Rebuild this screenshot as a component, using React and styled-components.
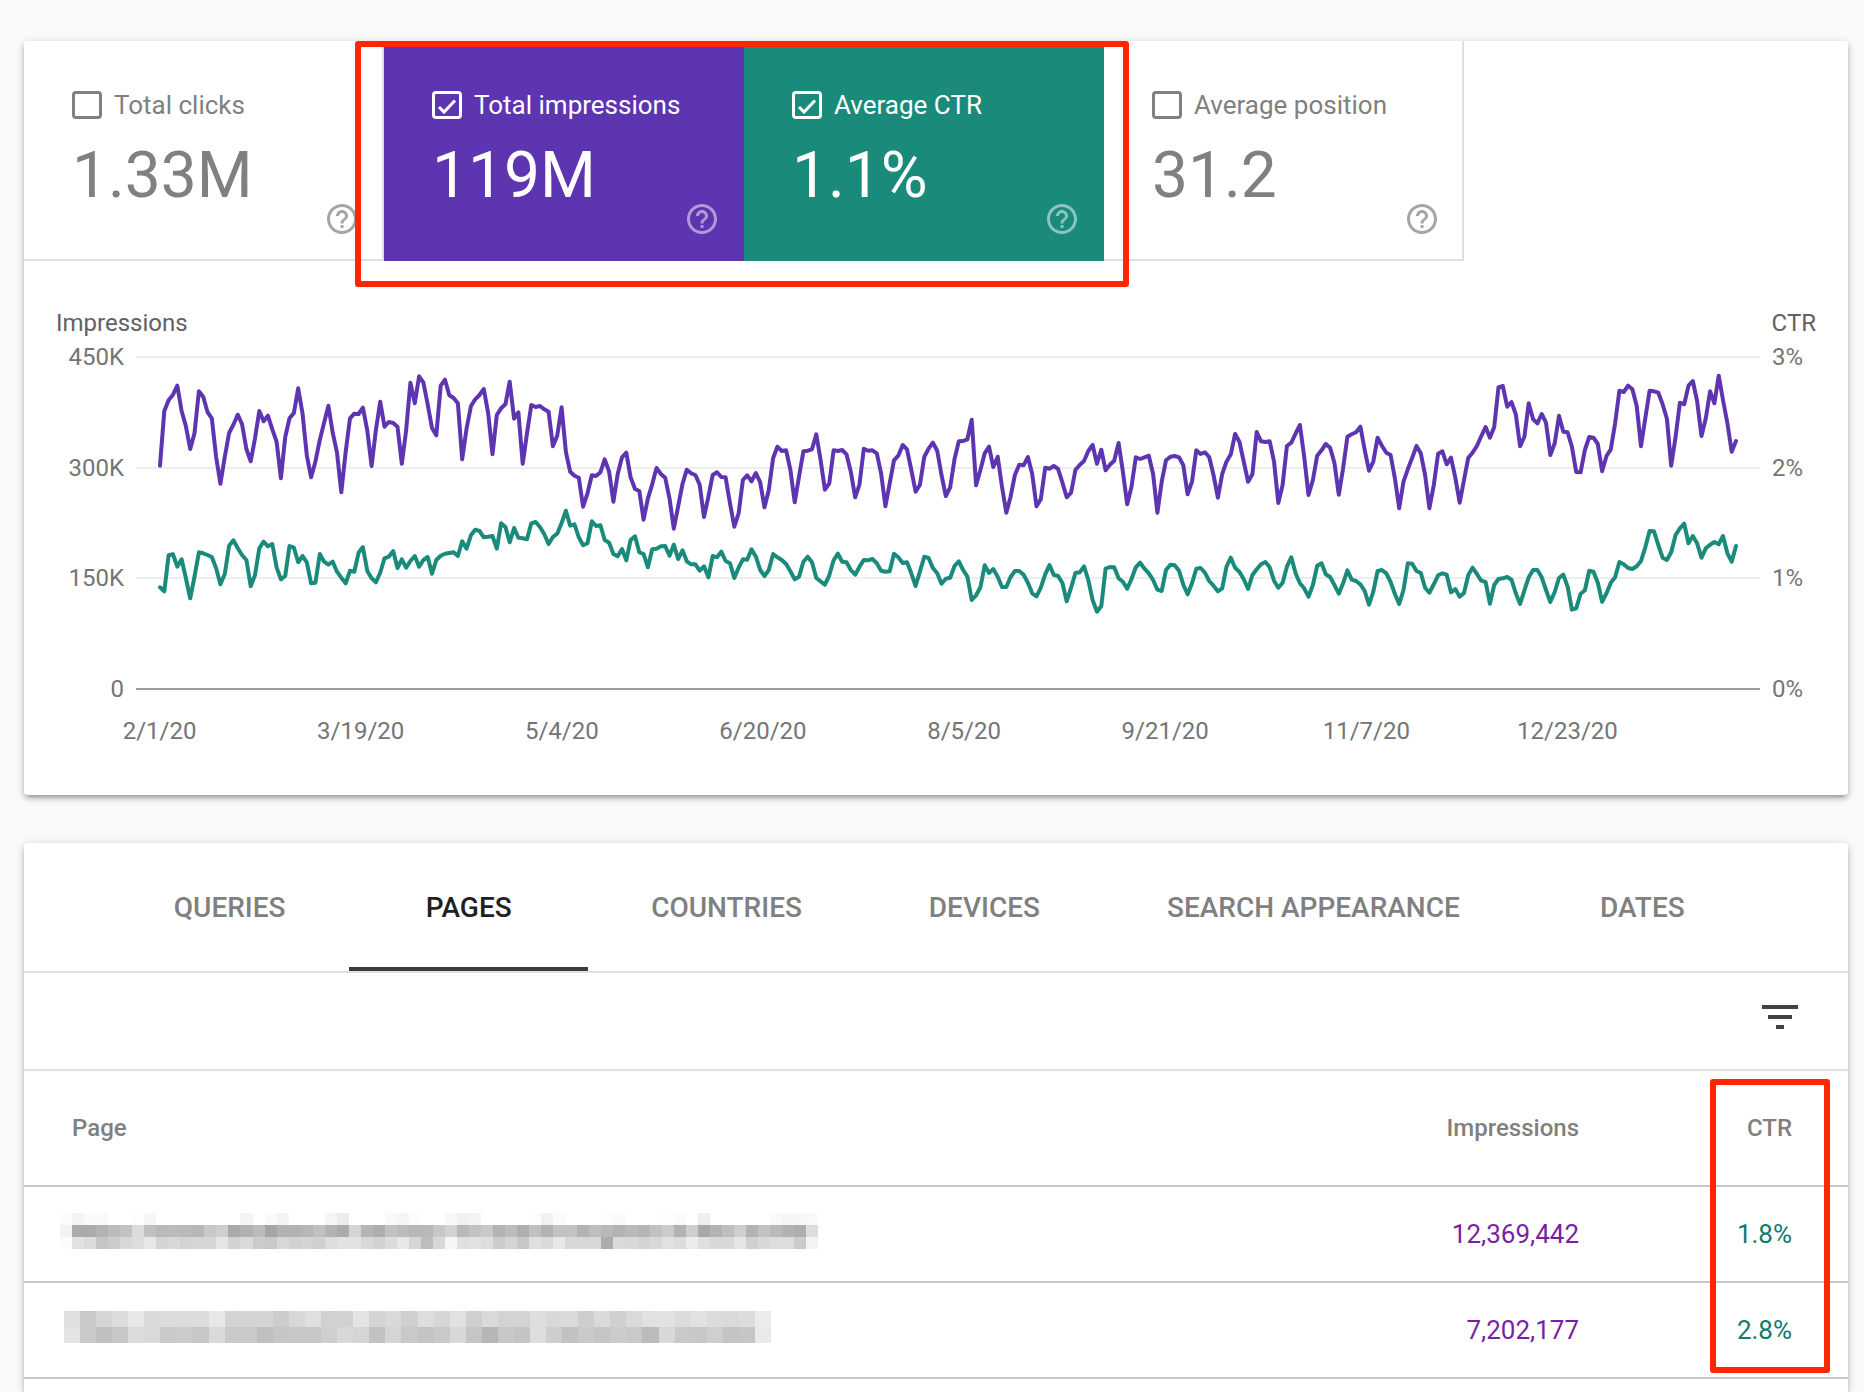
import React, { useState } from "react";
import styled, { createGlobalStyle } from "styled-components";
import { MdFilterList, MdHelpOutline } from "react-icons/md";

const PURPLE = "#5e35b1";
const TEAL = "#1a8a7b";

// Plot box, in svg units
const PLOT_WIDTH = 1624;
const PLOT_HEIGHT = 334;
const PLOT_INSET = 24;

// Daily readings from 2/1/20 on, where 996 is the top of the axis
const AXIS_TOP = 996;

const IMPRESSIONS = [
    670, 834, 866, 883, 910, 834, 788, 720, 767, 893, 877, 831, 812, 697, 616, 697, 768, 793, 823, 795,
    720, 683, 752, 834, 803, 820, 779, 742, 632, 755, 812, 828, 902, 827, 701, 635, 682, 747, 799, 850,
    769, 709, 590, 712, 812, 826, 825, 844, 775, 669, 777, 862, 787, 801, 798, 787, 676, 775, 919, 857,
    938, 919, 854, 783, 761, 910, 928, 881, 873, 857, 689, 782, 848, 869, 882, 900, 827, 704, 822, 842,
    854, 922, 811, 830, 676, 767, 852, 846, 849, 839, 832, 728, 760, 845, 711, 652, 640, 634, 547, 587,
    641, 639, 650, 689, 652, 562, 645, 695, 709, 635, 600, 594, 508, 572, 614, 663, 645, 634, 572, 481,
    547, 615, 658, 647, 642, 613, 516, 577, 642, 650, 636, 635, 557, 487, 527, 627, 641, 623, 648, 620,
    545, 597, 692, 727, 714, 716, 657, 560, 637, 713, 715, 719, 764, 687, 598, 617, 716, 714, 717, 704,
    652, 575, 614, 721, 715, 716, 707, 647, 548, 617, 686, 700, 732, 719, 657, 592, 612, 697, 721, 739,
    715, 642, 579, 605, 689, 743, 744, 749, 808, 611, 657, 707, 727, 666, 697, 607, 529, 577, 642, 673,
    671, 696, 645, 548, 569, 664, 661, 669, 660, 619, 575, 589, 657, 672, 684, 714, 732, 676, 718, 656,
    673, 685, 738, 652, 554, 607, 695, 690, 695, 700, 645, 529, 622, 686, 697, 699, 695, 671, 584, 622,
    716, 705, 710, 696, 642, 574, 645, 682, 704, 765, 741, 681, 622, 644, 771, 743, 741, 743, 683, 558,
    612, 729, 739, 766, 792, 697, 582, 627, 700, 716, 735, 724, 679, 583, 662, 757, 764, 770, 787, 717,
    655, 682, 754, 730, 709, 702, 632, 542, 622, 659, 694, 729, 707, 642, 542, 612, 706, 713, 674, 694,
    634, 559, 627, 694, 709, 729, 758, 786, 754, 786, 905, 909, 847, 861, 824, 728, 757, 857, 809, 797,
    825, 799, 702, 737, 820, 772, 770, 727, 651, 650, 717, 756, 754, 735, 653, 699, 719, 797, 895, 891,
    910, 899, 849, 728, 812, 895, 893, 889, 854, 811, 670, 757, 859, 854, 910, 924, 864, 759, 812, 893,
    857, 940, 867, 797, 712, 744,
];

const CTR = [
    305, 293, 401, 404, 367, 389, 332, 272, 337, 410, 407, 402, 396, 362, 314, 345, 430, 446, 423, 402,
    387, 308, 342, 422, 442, 428, 435, 365, 329, 339, 429, 424, 380, 399, 380, 317, 319, 405, 382, 373,
    382, 352, 334, 317, 355, 352, 409, 426, 354, 332, 320, 349, 392, 397, 414, 363, 389, 364, 384, 399,
    367, 387, 396, 346, 387, 400, 406, 408, 410, 399, 443, 421, 461, 478, 474, 455, 457, 459, 421, 497,
    486, 440, 483, 454, 452, 449, 497, 501, 486, 464, 435, 456, 466, 498, 535, 490, 494, 455, 431, 437,
    503, 489, 491, 447, 439, 405, 398, 420, 386, 447, 458, 410, 405, 365, 419, 421, 428, 429, 400, 433,
    390, 416, 383, 374, 374, 355, 368, 335, 399, 395, 412, 384, 377, 333, 364, 389, 388, 419, 397, 357,
    339, 357, 405, 395, 387, 375, 353, 329, 337, 382, 397, 380, 333, 323, 313, 341, 386, 406, 382, 380,
    357, 343, 367, 387, 386, 390, 377, 355, 352, 353, 406, 395, 378, 380, 347, 309, 352, 397, 393, 363,
    347, 316, 331, 334, 369, 383, 357, 337, 267, 281, 305, 371, 348, 360, 337, 306, 306, 336, 354, 354,
    343, 319, 287, 278, 304, 344, 372, 342, 339, 318, 263, 304, 348, 350, 368, 327, 267, 232, 249, 361,
    366, 365, 332, 322, 301, 330, 365, 379, 361, 347, 327, 298, 294, 357, 373, 371, 355, 313, 284, 317,
    361, 363, 349, 324, 310, 293, 302, 367, 394, 364, 351, 329, 300, 342, 359, 374, 381, 365, 325, 304,
    319, 367, 395, 347, 317, 302, 277, 312, 370, 377, 344, 336, 312, 286, 317, 356, 328, 324, 314, 294,
    253, 292, 354, 357, 347, 321, 285, 255, 297, 377, 376, 354, 348, 304, 289, 314, 341, 347, 343, 290,
    300, 277, 288, 342, 364, 345, 325, 321, 256, 312, 330, 332, 336, 328, 287, 255, 296, 335, 357, 357,
    335, 297, 261, 291, 333, 343, 307, 238, 242, 286, 296, 355, 352, 319, 262, 287, 319, 335, 381, 374,
    363, 360, 368, 384, 425, 474, 473, 432, 394, 387, 410, 462, 482, 496, 437, 459, 437, 394, 422, 433,
    441, 434, 459, 407, 382, 429,
];

const METRICS = [
    { id: "clicks", label: "Total clicks", value: "1.33M", color: null },
    { id: "impressions", label: "Total impressions", value: "119M", color: PURPLE },
    { id: "ctr", label: "Average CTR", value: "1.1%", color: TEAL },
    { id: "position", label: "Average position", value: "31.2", color: null },
];

const DATES = ["2/1/20", "3/19/20", "5/4/20", "6/20/20", "8/5/20", "9/21/20", "11/7/20", "12/23/20"];

const TABS = ["QUERIES", "PAGES", "COUNTRIES", "DEVICES", "SEARCH APPEARANCE", "DATES"];

// Page addresses are masked: each pair of hex digits is the grey of one block
const ROWS = [
    {
        impressions: "12,369,442",
        ctr: "1.8%",
        width: 758,
        height: 36,
        indent: 0,
        mask: [
            "fcf4fafafffffdf6fffffffffffffff4fffaf4fffffff5ecfffffff9f5fcfffff8f1f3fffffffffdf1fbfffffffdfafffffffdfaffeffffffffffffaf6f7f9",
            "f2ababb3bbc2dcc0b9bbbab7c8cfaab1bba5b2b2b6c0b3abd4b5adc2bcb8b8c7d2b9c3c9b4bdafc0b2c3c3b2beb9b3b9b5c1cbb2cea8b3bfcfb3c2b9b2aedd",
            "fce1dcc5cbd8dde7d4d8d3d6d6e5d2dacbc9d7d2d4d0dde2e2d8d2dce8d6bdd8f5e0e2deccd4c8dfdae8d8d8d8acdad8d3d8e1dcecdfd8d9e5d0d8ddddcbf3",
        ],
    },
    {
        impressions: "7,202,177",
        ctr: "2.8%",
        width: 707,
        height: 32,
        indent: 4,
        mask: [
            "e0c9d5dce8dadcdcdce8d3d4d4ccd8dfd1d2e4d4d9cfddd6e1cfdad3d3ded8dacedad0d9e1e2dce2dbdadceb",
            "e4c9bfc7dbd9c9cbc7dac9c9bfc6c7c7cfd8d5c2d5c9c4c9d8c5b6c8c4ddcec2cac5ccc9bbd8c9c8cfc4c6ea",
        ],
    },
];

const GlobalStyle = createGlobalStyle`
    * {
        box-sizing: border-box;
    }

    body {
        margin: 0;
        background: #fafafa;
        font-family: Roboto, "Liberation Sans", sans-serif;
        color: #808080;
    }

    button {
        padding: 0;
        border: 0;
        background: none;
        font: inherit;
        color: inherit;
        cursor: pointer;
    }
`;

const Page = styled.main`
    display: flex;
    flex-direction: column;
    gap: 48px;
    min-height: 100vh;
    padding: 41px 16px 0 24px;
`;

const Card = styled.section`
    flex: ${({ $grow }) => ($grow ? "1 0 auto" : "none")};
    background: #fff;
    border-radius: ${({ $grow }) => ($grow ? "4px 4px 0 0" : "4px")};
    box-shadow: 0 4px 4px 0 rgba(0, 0, 0, 0.14), 0 6px 2px -4px rgba(0, 0, 0, 0.12),
        0 2px 10px 0 rgba(0, 0, 0, 0.2);
`;

const Metrics = styled.div`
    position: relative;
    display: flex;
`;

const Tile = styled.div`
    display: flex;
    flex-direction: column;
    gap: 24px;
    width: 360px;
    padding: 50px 22px 22px 48px;
    border: solid ${({ $color }) => $color || "#e0e0e0"};
    border-width: 0 2px 2px 0;
    background: ${({ $color }) => $color || "transparent"};
    color: ${({ $color }) => ($color ? "#fff" : "inherit")};
`;

const TileLabel = styled.label`
    display: flex;
    align-items: center;
    gap: 12px;
    font-size: 26px;
    line-height: 28px;
    cursor: pointer;
`;

const CheckWrap = styled.span`
    display: grid;

    & > * {
        grid-area: 1 / 1;
    }
`;

const Checkbox = styled.input`
    appearance: none;
    width: 30px;
    height: 28px;
    margin: 0;
    border: 3px solid currentColor;
    border-radius: 4px;
    color: inherit;
    cursor: pointer;
`;

const CheckMark = styled.svg`
    width: 30px;
    height: 28px;
    fill: none;
    stroke: currentColor;
    stroke-width: 3;
    pointer-events: none;
`;

const TileFooter = styled.div`
    display: flex;
    justify-content: space-between;
    height: 94px;
`;

const TileValue = styled.strong`
    font-size: 64px;
    font-weight: 400;
    line-height: 66px;
`;

const HelpButton = styled.button`
    display: flex;
    align-self: flex-end;
    font-size: 36px;
    opacity: ${({ $dim }) => ($dim ? 0.5 : 0.7)};
`;

const Callout = styled.div`
    position: absolute;
    border: 6px solid #ff2600;
    border-radius: 3px;
    pointer-events: none;
`;

const MetricsCallout = styled(Callout)`
    top: 0;
    left: 331px;
    width: 774px;
    height: 246px;
`;

const CtrCallout = styled(Callout)`
    top: 8px;
    right: 18px;
    width: 120px;
    height: 294px;
`;

const Chart = styled.div`
    padding: 48px 32px 50px;
    font-size: 24px;
    line-height: 28px;
    color: #757575;
`;

const ChartHeader = styled.div`
    display: flex;
    justify-content: space-between;
    margin-bottom: 6px;
    color: #616161;
`;

const ChartBody = styled.div`
    display: grid;
    grid-template-columns: 68px 1fr 44px;
    column-gap: 12px;
`;

const Axis = styled.div`
    display: flex;
    flex-direction: column;
    justify-content: space-between;
    text-align: ${({ $align }) => $align};
`;

const Plot = styled.svg`
    display: block;
    width: 100%;
    height: 334px;
    margin: 13px 0;
`;

const Line = styled.polyline`
    fill: none;
    stroke: ${({ $color }) => $color};
    stroke-width: 4;
    stroke-linejoin: round;
    stroke-linecap: round;
    vector-effect: non-scaling-stroke;
`;

const DateAxis = styled.div`
    display: grid;
    grid-template-columns: repeat(8, 1fr);
    margin: 14px 148px 0 3px;
    text-align: center;
`;

const TabBar = styled.nav`
    display: flex;
    justify-content: center;
    border-bottom: 2px solid #e0e0e0;
`;

const Tab = styled.button`
    min-width: 239px;
    height: 128px;
    && {
        padding: 0 63px;
        font-size: 28px;
        font-weight: 500;
        color: ${({ $active }) => ($active ? "#212121" : "#808080")};
        box-shadow: ${({ $active }) => ($active ? "inset 0 -4px #3c3c3c" : "none")};
    }
`;

const Toolbar = styled.div`
    display: flex;
    justify-content: flex-end;
    padding: 20px 44px 28px;
    border-bottom: 2px solid #e0e0e0;
`;

const FilterButton = styled.button`
    && {
        display: flex;
        font-size: 48px;
        color: #424242;
    }
`;

const TableWrap = styled.div`
    position: relative;
`;

const Table = styled.table`
    width: 100%;
    border-collapse: separate;
    border-spacing: 0;
`;

const HeadCell = styled.th`
    width: ${({ $width }) => $width || "auto"};
    height: 116px;
    padding: ${({ $align }) => ($align === "right" ? "0 56px 0 0" : "0 0 0 48px")};
    border-bottom: 2px solid #c8c8c8;
    font-size: 24px;
    font-weight: 500;
    text-align: ${({ $align }) => $align};
`;

const Cell = styled.td`
    height: 96px;
    padding: 0 56px 0 0;
    border-bottom: 2px solid #c8c8c8;
    font-size: 26px;
    text-align: right;
    color: ${({ $color }) => $color};
`;

const PageCell = styled(Cell)`
    padding: 0 0 6px 36px;
    text-align: left;
`;

const MaskSvg = styled.svg`
    display: block;
    margin-left: ${({ $indent }) => $indent}px;
`;

const toPoints = (values) =>
    values
        .map((value, day) => {
            const x = PLOT_INSET + (day * (PLOT_WIDTH - 2 * PLOT_INSET)) / (values.length - 1);
            const y = 1 + (1 - value / AXIS_TOP) * (PLOT_HEIGHT - 2);
            return `${x.toFixed(1)},${y.toFixed(1)}`;
        })
        .join(" ");

const MetricTile = ({ metric, checked, onToggle }) => (
    <Tile $color={checked ? metric.color || "#4285f4" : null}>
        <TileLabel htmlFor={metric.id}>
            <CheckWrap>
                <Checkbox id={metric.id} type="checkbox" checked={checked} onChange={onToggle} />
                {checked && (
                    <CheckMark viewBox="0 0 30 28" aria-hidden="true">
                        <path d="M7 16l5 5L23 9.500" />
                    </CheckMark>
                )}
            </CheckWrap>
            {metric.label}
        </TileLabel>
        <TileFooter>
            <TileValue>{metric.value}</TileValue>
            <HelpButton $dim={checked} type="button" aria-label={`About ${metric.label}`}>
                <MdHelpOutline />
            </HelpButton>
        </TileFooter>
    </Tile>
);

const PerformanceChart = () => (
    <Chart>
        <ChartHeader>
            <span>Impressions</span>
            <span>CTR</span>
        </ChartHeader>
        <ChartBody>
            <Axis $align="right">
                {["450K", "300K", "150K", "0"].map((tick) => (
                    <span key={tick}>{tick}</span>
                ))}
            </Axis>
            <Plot
                viewBox={`0 0 ${PLOT_WIDTH} ${PLOT_HEIGHT}`}
                preserveAspectRatio="none"
                role="img"
                aria-label="Impressions and CTR by day"
            >
                {[0, 111, 221].map((y) => (
                    <rect key={y} y={y} width={PLOT_WIDTH} height="2" fill="#eee" />
                ))}
                <rect y={PLOT_HEIGHT - 2} width={PLOT_WIDTH} height="2" fill="#9e9e9e" />
                <Line $color={PURPLE} points={toPoints(IMPRESSIONS)} />
                <Line $color={TEAL} points={toPoints(CTR)} />
            </Plot>
            <Axis $align="left">
                {["3%", "2%", "1%", "0%"].map((tick) => (
                    <span key={tick}>{tick}</span>
                ))}
            </Axis>
        </ChartBody>
        <DateAxis>
            {DATES.map((date) => (
                <span key={date}>{date}</span>
            ))}
        </DateAxis>
    </Chart>
);

const MaskedAddress = ({ row }) => (
    <MaskSvg
        $indent={row.indent}
        width={row.width}
        height={row.height}
        viewBox={`0 0 ${row.mask[0].length / 2} ${row.mask.length}`}
        preserveAspectRatio="none"
        shapeRendering="crispEdges"
        role="img"
        aria-label="Hidden page address"
    >
        {row.mask.map((line, y) =>
            line.match(/../g).map((grey, x) => (
                <rect key={`${x}-${y}`} x={x} y={y} width="1" height="1" fill={`#${grey}${grey}${grey}`} />
            ))
        )}
    </MaskSvg>
);

const App = () => {
    const [selected, setSelected] = useState(["impressions", "ctr"]);
    const [activeTab, setActiveTab] = useState("PAGES");

    const toggle = (id) =>
        setSelected((ids) => (ids.includes(id) ? ids.filter((item) => item !== id) : [...ids, id]));

    return (
        <>
            <GlobalStyle />
            <Page>
                <Card>
                    <Metrics>
                        {METRICS.map((metric) => (
                            <MetricTile
                                key={metric.id}
                                metric={metric}
                                checked={selected.includes(metric.id)}
                                onToggle={() => toggle(metric.id)}
                            />
                        ))}
                        <MetricsCallout />
                    </Metrics>
                    <PerformanceChart />
                </Card>

                <Card $grow>
                    <TabBar>
                        {TABS.map((tab) => (
                            <Tab
                                key={tab}
                                type="button"
                                $active={tab === activeTab}
                                onClick={() => setActiveTab(tab)}
                            >
                                {tab}
                            </Tab>
                        ))}
                    </TabBar>
                    <Toolbar>
                        <FilterButton type="button" aria-label="Filter rows">
                            <MdFilterList />
                        </FilterButton>
                    </Toolbar>
                    <TableWrap>
                        <Table>
                            <thead>
                                <tr>
                                    <HeadCell $align="left">Page</HeadCell>
                                    <HeadCell $align="right" $width="240px">
                                        Impressions
                                    </HeadCell>
                                    <HeadCell $align="right" $width="213px">
                                        CTR
                                    </HeadCell>
                                </tr>
                            </thead>
                            <tbody>
                                {ROWS.map((row) => (
                                    <tr key={row.impressions}>
                                        <PageCell>
                                            <MaskedAddress row={row} />
                                        </PageCell>
                                        <Cell $color="#7b1fa2">{row.impressions}</Cell>
                                        <Cell $color="#0f7b6c">{row.ctr}</Cell>
                                    </tr>
                                ))}
                            </tbody>
                        </Table>
                        <CtrCallout />
                    </TableWrap>
                </Card>
            </Page>
        </>
    );
};

export default App;
